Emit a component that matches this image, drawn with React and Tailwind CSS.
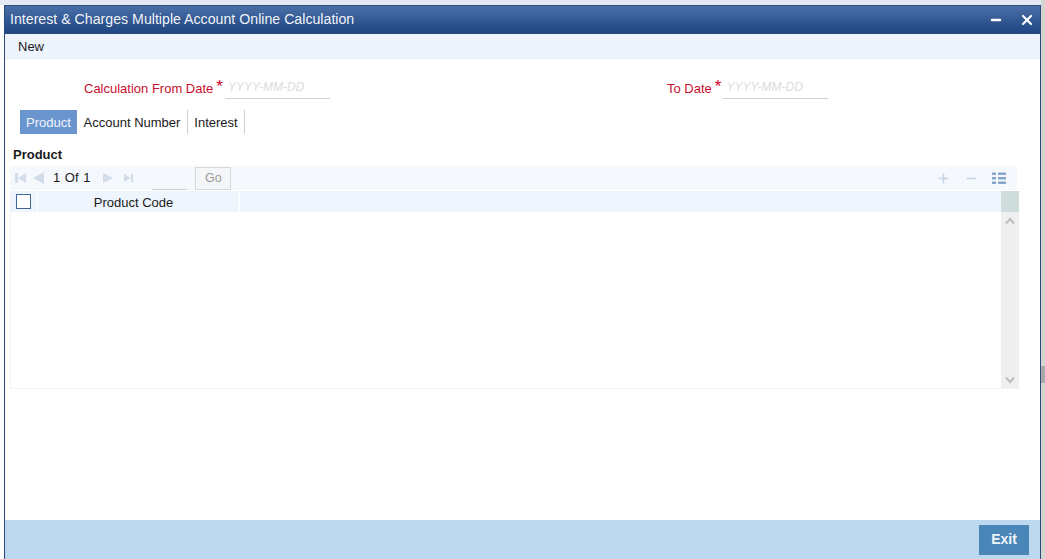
import { Minus, Plus, X } from "lucide-react"

function Triangle({ dir = "left", bar = false, className = "" }) {
  // small pager arrows, drawn to match the faded glyphs
  return (
    <svg width="14" height="12" viewBox="0 0 14 12" className={className}>
      {bar && dir === "left" && <rect x="2" y="1" width="3" height="10" fill="currentColor" />}
      {bar && dir === "right" && <rect x="10" y="2" width="2" height="8" fill="currentColor" />}
      {dir === "left" ? (
        bar ? <path d="M13 1V11L5 6Z" fill="currentColor" /> : <path d="M13 0V12L2 6Z" fill="currentColor" />
      ) : (
        <path d={bar ? "M3 2V10L10 6Z" : "M2 1V11L12 6Z"} fill="currentColor" />
      )}
    </svg>
  )
}

function DateField({ label, width }) {
  return (
    <div className={`flex items-start ${width}`}>
      <span className="mt-[5px] text-[13px] leading-4 text-[#c8102e] whitespace-nowrap">{label}</span>
      <span className="ml-[3px] mt-[3px] text-[17px] leading-4 text-[#d5001f]">*</span>
      <div className="ml-[2px] h-[23px] w-[105px] border-b border-[#cfcfcf] pl-[3px] pt-[3px] text-[12px] leading-4 italic text-[#dcdcdc]">
        YYYY-MM-DD
      </div>
    </div>
  )
}

export default function App() {
  return (
    <div className="flex h-[559px] w-[1045px] overflow-hidden bg-white font-['Liberation_Sans',Arial,sans-serif]">
      <div className="flex w-[1041px] flex-col">
        <div className="h-[5px] bg-[#e3eaf6]" />
        <div className="flex min-h-0 flex-1">
          <div className="w-[4px] bg-white" />
          <div className="flex w-[1037px] flex-col border-x border-[#2c4a7c] bg-white">
            {/* Title bar */}
            <div className="flex h-[29px] items-center justify-between border-y border-[#2c4a7c] bg-gradient-to-b from-[#4a6fa8] to-[#1f4683] pl-[5px] pr-[5px]">
              <span className="text-[14.18px] text-white/95">Interest &amp; Charges Multiple Account Online Calculation</span>
              <div className="flex items-center gap-[16px]">
                <Minus size={14} strokeWidth={4} className="text-white" />
                <X size={16} strokeWidth={3.2} className="text-white" />
              </div>
            </div>

            {/* Menu */}
            <div className="flex h-[25px] items-center border-b border-[#e6ebf3] bg-[#eef4fd] pl-[13px] pt-[1px] text-[13px] text-[#1a1a1a]">
              New
            </div>

            {/* Body */}
            <div className="flex min-h-0 flex-1 flex-col">
              <div className="mt-[17px] flex pl-[79px]">
                <DateField label="Calculation From Date" width="w-[583px]" />
                <DateField label="To Date" width="w-[200px]" />
              </div>

              <div className="ml-[15px] mt-[11px] flex h-[24px] items-stretch text-[13px] leading-[26px]">
                <div className="w-[57px] bg-[#6a95cf] text-center text-white/90">Product</div>
                <div className="w-[111px] border-r border-[#cfcfcf] text-center text-[#1a1a1a]">Account Number</div>
                <div className="w-[57px] border-r border-[#cfcfcf] text-center text-[#1a1a1a]">Interest</div>
              </div>

              <div className="ml-[8px] mt-[13px] text-[13px] font-bold leading-4 text-[#1a1a1a]">Product</div>

              {/* Pager */}
              <div className="ml-[5px] mt-[3px] flex h-[24px] w-[1007px] items-center bg-[#f5f9fe] pl-[3px] pr-[11px]">
                <Triangle bar className="text-[#d3dde9]" />
                <Triangle className="ml-[4px] text-[#d3dde9]" />
                <span className="ml-[8px] text-[13px] text-[#1a1a1a] [word-spacing:1px]">1 Of 1</span>
                <Triangle dir="right" className="ml-[11px] text-[#d3dde9]" />
                <Triangle dir="right" bar className="ml-[6px] text-[#d3dde9]" />
                <div className="ml-[17px] h-[24px] w-[35px] border-b border-[#cfcfcf]" />
                <div className="ml-[8px] flex h-[23px] w-[36px] items-center justify-center border border-[#d8d8d8] bg-[#f4f6f8] text-[12.5px] text-[#9a9a9a]">
                  Go
                </div>
                <div className="ml-auto flex items-center gap-[13px] text-[#c3d2e4]">
                  <Plus size={15} strokeWidth={2.4} />
                  <Minus size={15} strokeWidth={2.4} />
                  <svg width="14" height="12" viewBox="0 0 14 12" className="text-[#88a6cc]">
                    <path d="M0 .5H4V3H0ZM6 .5H14V3H6ZM0 5H4V7.5H0ZM6 5H14V7.5H6ZM0 9.5H4V12H0ZM6 9.5H14V12H6Z" fill="currentColor" />
                  </svg>
                </div>
              </div>

              {/* Table */}
              <div className="ml-[5px] mt-[1px] flex h-[198px] w-[1009px] border-b border-l border-[#eef1f5]">
                <div className="flex-1">
                  <div className="flex h-[21px] bg-[#eef5fd]">
                    <div className="flex w-[27px] items-center justify-center border-r border-white pr-[2px]">
                      <div className="h-[15px] w-[15px] border border-[#3f6896] bg-white" />
                    </div>
                    <div className="w-[202px] border-r border-white pr-[10px] text-center text-[13px] leading-[23px] text-[#1a1a1a]">
                      Product Code
                    </div>
                  </div>
                </div>
                <div className="flex w-[18px] flex-col bg-[#efefef]">
                  <div className="h-[21px] bg-[#cfdcdc]" />
                  <svg width="18" height="14" viewBox="0 0 18 14" className="mt-[2px] text-[#bdbdbd]">
                    <path d="M5 9.5L9 5L13 9.5" fill="none" stroke="currentColor" strokeWidth="2" />
                  </svg>
                  <svg width="18" height="14" viewBox="0 0 18 14" className="mb-[1px] mt-auto text-[#bdbdbd]">
                    <path d="M5 4.5L9 9L13 4.5" fill="none" stroke="currentColor" strokeWidth="2" />
                  </svg>
                </div>
              </div>
            </div>

            {/* Footer */}
            <div className="flex h-[39px] items-center justify-end bg-[#bcd8ee] pr-[11px]">
              <div className="flex h-[30px] w-[50px] items-center justify-center bg-[#4a86b8] text-[14px] font-bold text-[#eef5fb]">
                Exit
              </div>
            </div>
          </div>
        </div>
      </div>

      {/* Sliver of the page behind the window */}
      <div className="flex w-[4px] flex-col bg-[#d4d4d0]">
        <div className="mt-[366px] h-[17px] bg-[#a9a9a9]" />
      </div>
    </div>
  )
}
